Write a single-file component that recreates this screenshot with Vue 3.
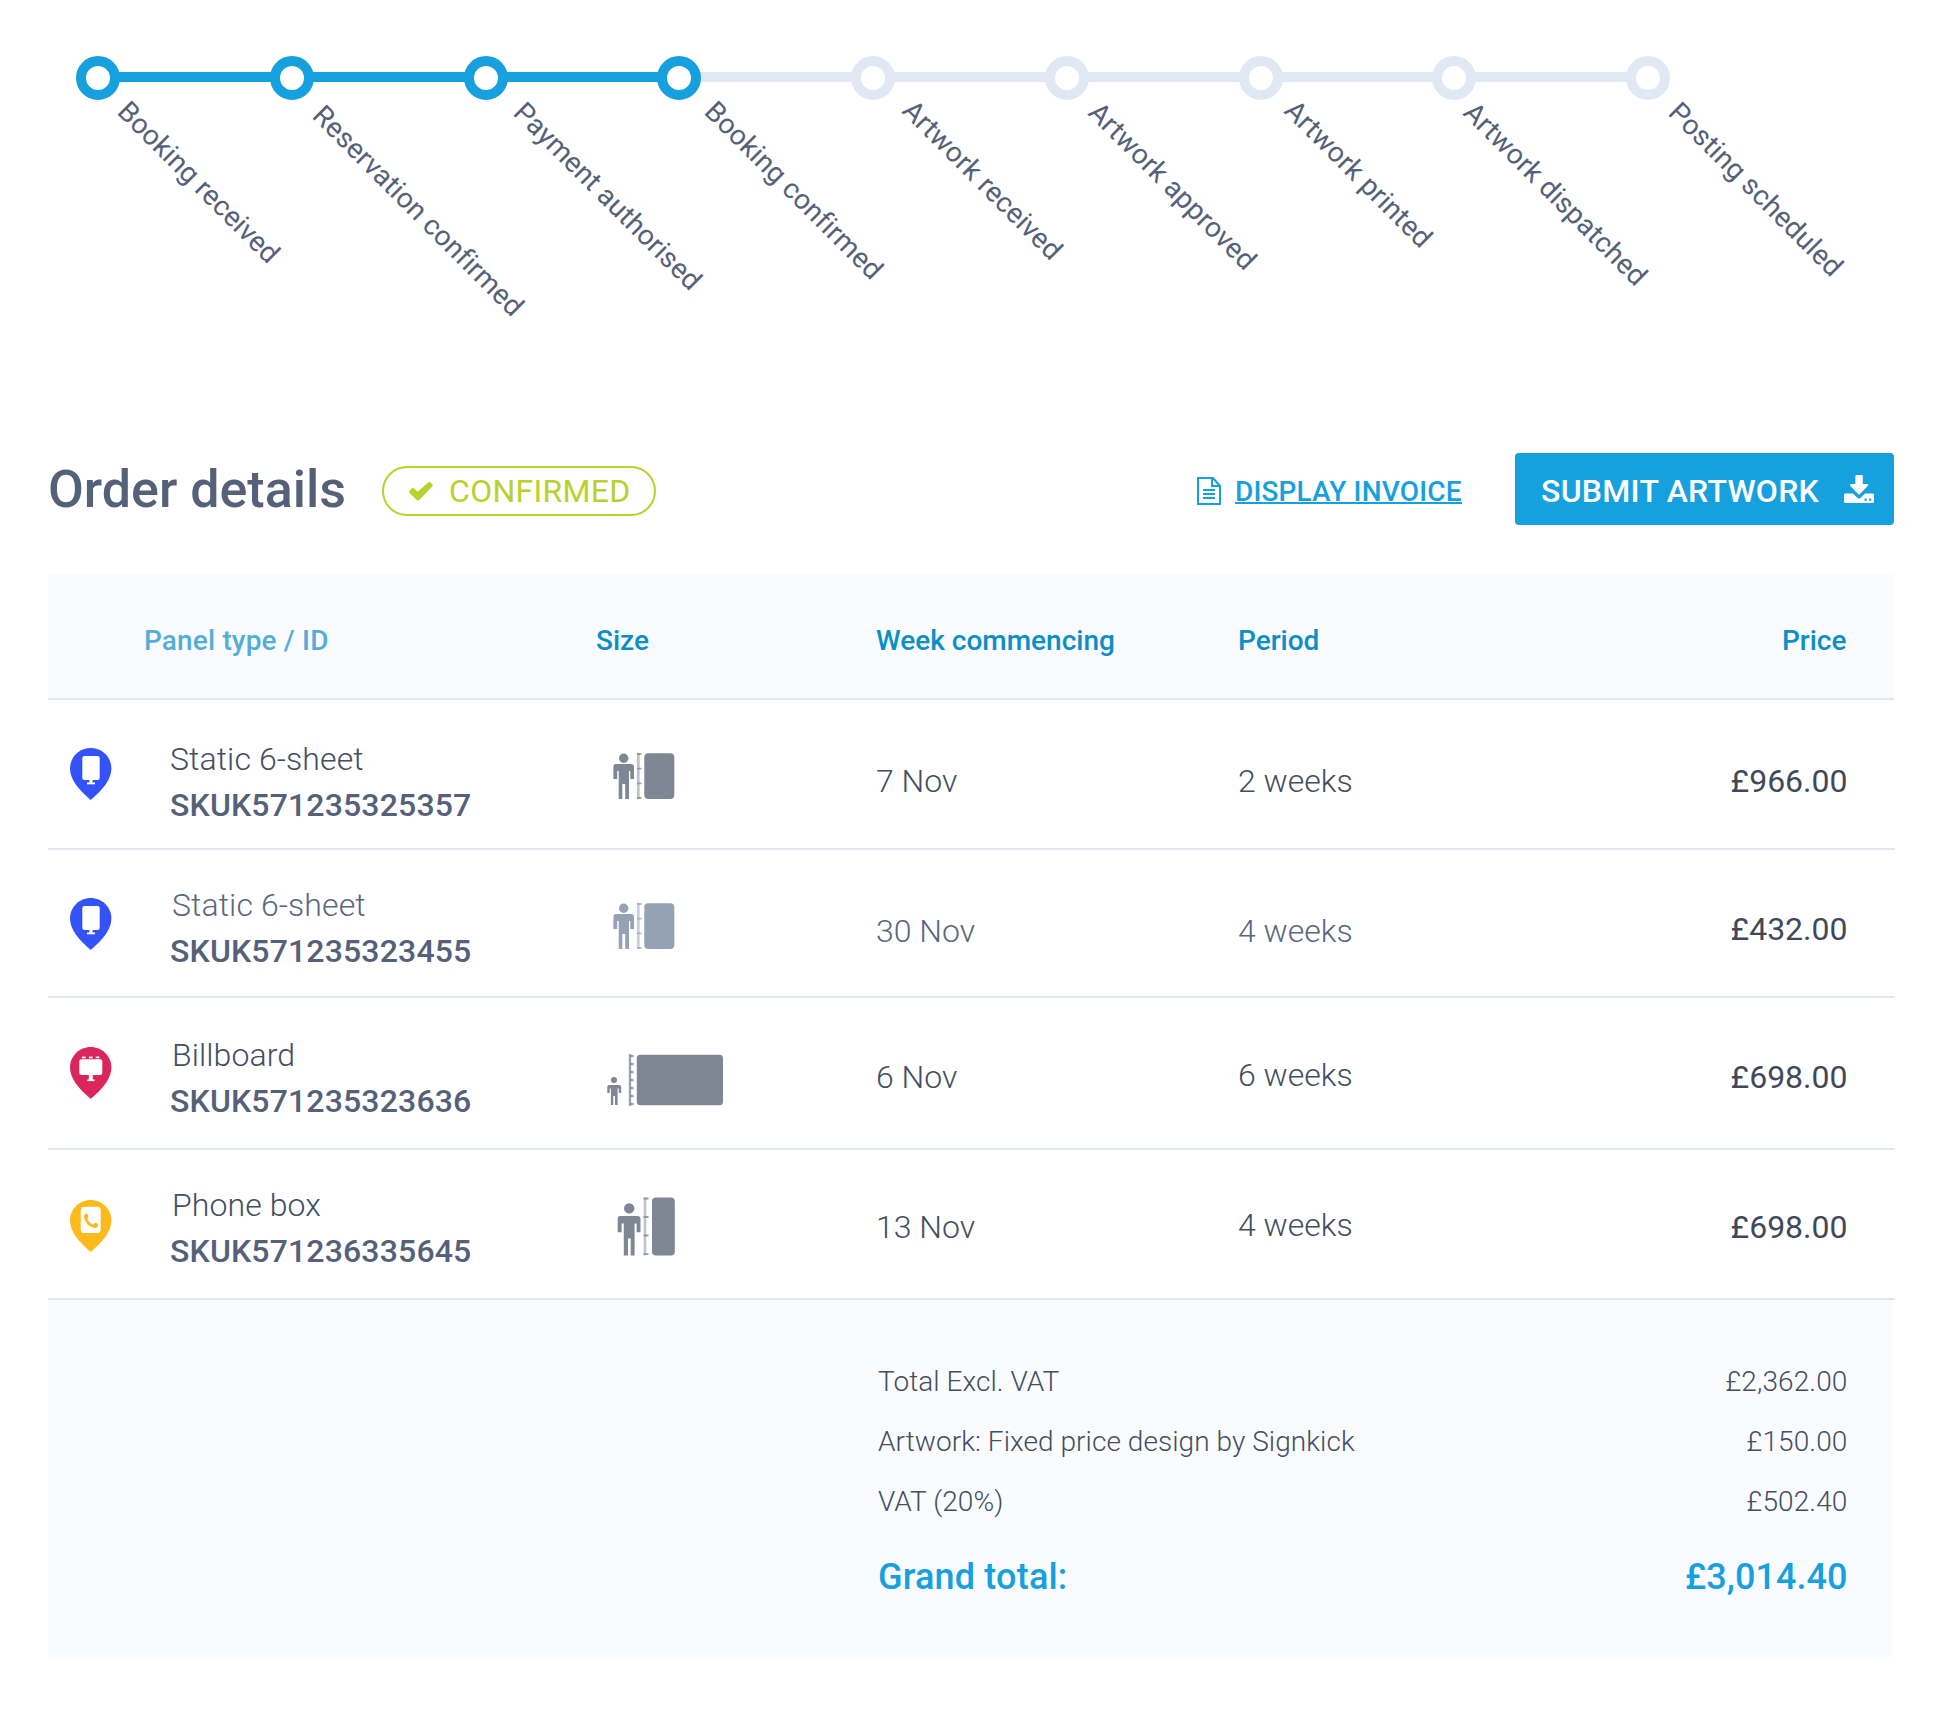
<script setup>
const steps = [
  { label: 'Booking received', done: true },
  { label: 'Reservation confirmed', done: true },
  { label: 'Payment authorised', done: true },
  { label: 'Booking confirmed', done: true },
  { label: 'Artwork received', done: false },
  { label: 'Artwork approved', done: false },
  { label: 'Artwork printed', done: false },
  { label: 'Artwork dispatched', done: false },
  { label: 'Posting scheduled', done: false },
]

const items = [
  { type: 'Static 6-sheet', id: 'SKUK571235325357', kind: 'sheet', week: '7 Nov', period: '2 weeks', price: '£966.00' },
  { type: 'Static 6-sheet', id: 'SKUK571235323455', kind: 'sheet', week: '30 Nov', period: '4 weeks', price: '£432.00', muted: true },
  { type: 'Billboard', id: 'SKUK571235323636', kind: 'billboard', week: '6 Nov', period: '6 weeks', price: '£698.00' },
  { type: 'Phone box', id: 'SKUK571236335645', kind: 'phone', week: '13 Nov', period: '4 weeks', price: '£698.00' },
]

const totals = [
  { label: 'Total Excl. VAT', value: '£2,362.00' },
  { label: 'Artwork: Fixed price design by Signkick', value: '£150.00' },
  { label: 'VAT (20%)', value: '£502.40' },
]

const billboardTicks = [0, 8, 16, 24, 32, 40, 48]
</script>

<template>
  <main class="page">
    <ol class="steps">
      <li v-for="(step, i) in steps" :key="step.label" class="step" :class="['s' + (i + 1), { done: step.done, lit: i < 3 }]">
        <span class="dot"></span>
        <span class="label">{{ step.label }}</span>
      </li>
    </ol>

    <header class="bar">
      <h1>Order details</h1>
      <span class="pill">
        <svg width="24" height="20" viewBox="0 0 24 20"><path d="M1 9.300 3 7.300Q4 6.600 5 7.300L8.600 10.700 19.500 1.300Q20.800.500 21.700 1.500L23.400 3.600Q24 4.700 23.200 5.600L10 19.200Q9 20 8 19.200L.600 12Q-.300 10.600 1 9.300Z" fill="currentColor" /></svg>
        CONFIRMED
      </span>
      <a class="invoice">
        <svg width="24" height="28" viewBox="0 0 24 28" fill="none" stroke="currentColor" stroke-width="2">
          <path d="M1 1H16L23 9V27H1Z" />
          <path d="M15 1V9H23M6 13H18M6 17H18M6 21H18" />
        </svg>
        <span>DISPLAY INVOICE</span>
      </a>
      <button class="submit">
        SUBMIT ARTWORK
        <svg width="30" height="28" viewBox="0 0 30 28" fill="currentColor">
          <path d="M12.600 0h5c.8 0 1.200.5 1.200 1.200V9h4.400c1 0 1.400 1 .7 1.700L15 20 6.200 10.700C5.500 10 6 9 7 9h4.400V1.200C11.400.5 11.800 0 12.600 0Z" />
          <path fill-rule="evenodd" d="M1.500 18.500H9l4 4c1.200 1.200 2.800 1.200 4 0l4-4h7.500c.9 0 1.500.7 1.500 1.500v6.500c0 .9-.6 1.500-1.500 1.500h-27C.6 28 0 27.400 0 26.500V20c0-.8.6-1.500 1.500-1.500ZM20.500 23.600v2.200h2.200v-2.200ZM25 23.600v2.200h2.200v-2.200Z" />
        </svg>
      </button>
    </header>

    <section class="table">
      <div class="head">
        <span class="first">Panel type / ID</span>
        <span>Size</span>
        <span>Week commencing</span>
        <span>Period</span>
        <span class="num">Price</span>
      </div>

      <div v-for="(item, i) in items" :key="item.id" class="row" :class="['r' + (i + 1), item.kind, { muted: item.muted }]">
        <svg class="pin" width="42" height="52" viewBox="0 0 42 52">
          <path d="M20.700 0C9.300 0 0 9 0 20.500 0 31.500 8.500 41.500 20.700 52 32.900 41.500 41.400 31.500 41.400 20.500 41.400 9 32.100 0 20.700 0Z" fill="currentColor" />
          <g v-if="item.kind === 'sheet'" fill="#fff">
            <rect x="12.300" y="8" width="17.400" height="24" rx="2.200" />
            <rect x="19.400" y="31" width="3.200" height="5" />
            <rect x="17" y="34.500" width="8" height="1.800" />
          </g>
          <g v-else-if="item.kind === 'billboard'" fill="#fff">
            <rect x="9.300" y="12.200" width="23" height="15.800" rx="2" />
            <rect x="12" y="9.600" width="3.600" height="1.700" />
            <rect x="18.900" y="9.600" width="3.600" height="1.700" />
            <rect x="25.800" y="9.600" width="3.600" height="1.700" />
            <rect x="18.800" y="27" width="4" height="6" />
            <rect x="17.300" y="32.400" width="7.200" height="1.700" />
          </g>
          <g v-else>
            <rect x="10.700" y="6.800" width="20" height="26.200" rx="3.600" fill="#fff" />
            <path d="M15.600 17C16 22 20 26 25.500 26.600" fill="none" stroke="currentColor" stroke-width="2.800" />
            <path d="M14 16.500c0-2 1-2.700 2.300-2.700 1.400 0 2 1.300 2 2.700s-.7 2.200-1.600 2.800l-2.300.4ZM23.500 24.200c.5-1 1.400-1.400 2.700-1.100 1.400.3 2.100 1 1.800 2.300-.3 1.400-1.200 2.400-2.800 2.400l-2.200-1Z" fill="currentColor" />
          </g>
        </svg>

        <div class="panel">
          <div class="type">{{ item.type }}</div>
          <div class="sku">{{ item.id }}</div>
        </div>

        <svg v-if="item.kind === 'sheet'" class="size" width="64" height="46" viewBox="0 0 64 46" fill="currentColor">
          <circle cx="10.700" cy="5.200" r="4.700" />
          <path d="M3 11H18Q21 11 21 14V26H17.300V18H16V46H12.200V31H9.300V46H5.700V18H4.200V26H.4V14Q.4 11 3 11Z" />
          <path d="M25.300 0V46" stroke="currentColor" stroke-width="2.800" stroke-opacity=".5" />
          <path d="M24 1H28.500M24 15.700H28.500M24 30.300H28.500M24 45H28.500" stroke="currentColor" stroke-width="1.800" stroke-opacity=".7" />
          <rect x="31.300" y=".3" width="30" height="45.600" rx="4" />
        </svg>
        <svg v-else-if="item.kind === 'billboard'" class="size" width="118" height="52" viewBox="0 0 118 52" fill="currentColor">
          <circle cx="7" cy="26" r="3" />
          <path d="M2 31H12Q14.200 31 14.200 33V39H11.800V34.500H10.600V51H8V42H6.200V51H3.900V34.500H2.700V39H.3V33Q.3 31 2 31Z" />
          <path d="M23 0V52" stroke="currentColor" stroke-width="2.400" stroke-opacity=".75" />
          <rect v-for="t in billboardTicks" :key="t" x="23" :y="t + 1" width="3.600" height="2.200" opacity=".8" />
          <rect x="29.800" y=".8" width="86.200" height="50.400" rx="3.500" />
        </svg>
        <svg v-else class="size" width="60" height="59" viewBox="0 0 60 59" fill="currentColor">
          <circle cx="12.200" cy="11.400" r="5.200" />
          <path d="M3 19H20.500Q23.500 19 23.500 22V35.200H19.600V26.500H17.600V58.500H13.700V41.500H11V58.500H6.800V26.500H4.600V35.200H.7V22Q.7 19 3 19Z" />
          <path d="M28 .5V58.500" stroke="currentColor" stroke-width="2.600" stroke-opacity=".5" />
          <path d="M26.600 1.500H31.500M26.600 20H31.500M26.600 38.500H31.500M26.600 57.200H31.500" stroke="currentColor" stroke-width="1.800" stroke-opacity=".8" />
          <rect x="35" y=".4" width="22.800" height="58" rx="4" />
        </svg>

        <span class="week">{{ item.week }}</span>
        <span class="period">{{ item.period }}</span>
        <span class="price num">{{ item.price }}</span>
      </div>

      <footer class="totals">
        <div v-for="t in totals" :key="t.label" class="line">
          <span>{{ t.label }}</span>
          <span class="amount">{{ t.value }}</span>
        </div>
        <div class="line grand">
          <span>Grand total:</span>
          <span class="sum">£3,014.40</span>
        </div>
      </footer>
    </section>
  </main>
</template>

<style>
body {
  margin: 0;
  background: #fff;
}
</style>

<style scoped>
.page {
  box-sizing: border-box;
  width: 1956px;
  height: 1724px;
  padding: 56px 61px 0 48px;
  overflow: hidden;
  font-family: Roboto, 'Liberation Sans', sans-serif;
  color: #434e60;
}

/* progress tracker */
.steps {
  display: flex;
  height: 397px;
  margin: 0;
  padding: 0 0 0 28px;
  box-sizing: border-box;
  list-style: none;
}
.step {
  position: relative;
  flex: none;
  width: 193.75px;
  height: 44px;
  color: #e0e8f4;
}
.step.done {
  color: #17a0de;
}
.step::before {
  content: '';
  position: absolute;
  left: 42px;
  top: 16px;
  width: 154px;
  height: 10px;
  background: #e0e8f4;
}
.step.lit::before {
  background: #17a0de;
}
.step:last-child::before {
  display: none;
}
.dot {
  position: relative;
  display: block;
  box-sizing: border-box;
  width: 44px;
  height: 44px;
  border: 10px solid currentColor;
  border-radius: 50%;
  background: #fff;
}
.label {
  position: absolute;
  left: calc(22px + var(--dx));
  top: calc(22px - 26px + var(--dy));
  font-size: 28px;
  line-height: 33px;
  letter-spacing: 0.13px;
  white-space: nowrap;
  color: #556178;
  transform: rotate(45deg);
  transform-origin: 0 26px;
}
.s1 { --dx: 18px; --dy: 34.5px; }
.s2 { --dx: 18.8px; --dy: 38.7px; }
.s3 { --dx: 26.2px; --dy: 36px; }
.s4 { --dx: 23.8px; --dy: 34.9px; }
.s5 { --dx: 27.9px; --dy: 34.2px; }
.s6 { --dx: 20.1px; --dy: 36.2px; }
.s7 { --dx: 22.9px; --dy: 34.4px; }
.s8 { --dx: 7.8px; --dy: 36.4px; }
.s9 { --dx: 18.6px; --dy: 35.7px; }

/* heading bar */
.bar {
  display: flex;
  width: 1846px;
  height: 121px;
}
h1 {
  width: 334px;
  margin: 6px 0 0;
  font-size: 52px;
  line-height: 62px;
  font-weight: 500;
  color: #556178;
  white-space: nowrap;
}
.pill {
  display: flex;
  box-sizing: border-box;
  width: 274px;
  height: 50px;
  margin-top: 13px;
  padding: 4px 0 0 25px;
  border: 2px solid #b9d12b;
  border-radius: 25px;
  font-size: 32px;
  line-height: 38px;
  font-weight: 400;
  letter-spacing: 0.3px;
  color: #b9d12b;
}
.pill svg {
  margin: 9px 16px 0 0;
}
.invoice {
  display: flex;
  margin: 24px 0 0 541px;
  font-size: 28px;
  line-height: 33px;
  font-weight: 500;
  letter-spacing: 0.14px;
  color: #17a0de;
}
.invoice span {
  height: 27px;
  margin: -2px 0 0 14px;
  border-bottom: 2px solid #17a0de;
}
.submit {
  display: flex;
  box-sizing: border-box;
  width: 379px;
  height: 72px;
  margin-left: auto;
  padding: 19px 20px 0 26px;
  border: 0;
  border-radius: 4px;
  background: #17a0de;
  color: #fff;
  font: 500 32px/38px Roboto, 'Liberation Sans', sans-serif;
  letter-spacing: 0.26px;
  justify-content: space-between;
  white-space: nowrap;
}
.submit svg {
  margin-top: 3px;
}

/* order table */
.table {
  width: 1847px;
}
.head,
.row {
  display: grid;
  box-sizing: border-box;
  border-bottom: 2px solid #dfe8f4;
  align-items: start;
}
.head {
  grid-template-columns: 452px 280px 362px 300px 1fr;
  width: 1846px;
  height: 126px;
  padding: 50px 47.500px 0 96px;
  border-radius: 4px 4px 0 0;
  background: #fafbfd;
  font-size: 28px;
  line-height: 33px;
  font-weight: 500;
  color: #0c8ec7;
}
.first {
  letter-spacing: 0.15px;
  opacity: 0.7;
}
.num {
  text-align: right;
}
.row {
  grid-template-columns: 100px 443px 263px 362px 300px 1fr;
  height: 150px;
  padding: 0 47.500px 0 22px;
  font-size: 32px;
  line-height: 38px;
  font-weight: 300;
}
.r2 { height: 148px; }
.r3 { height: 152px; }
.panel {
  line-height: 46px;
  margin-top: 32px;
}
.r1 .panel { margin-top: 36px; }
.r3 .panel { margin-top: 34px; }
.type {
  padding-left: 2px;
  letter-spacing: 0.1px;
}
.r1 .type { padding-left: 0; }
.sku {
  font-weight: 500;
  letter-spacing: 0.15px;
  color: #556178;
}
.muted {
  color: #5a677d;
}
.pin { margin-top: 48px; color: #3452f9; }
.r3 .pin { margin-top: 49px; color: #db265c; }
.r4 .pin { margin-top: 50px; color: #fdba1b; }
.size {
  margin: 53px 0 0 0;
  color: #7f8795;
}
.muted .size { color: #95a1b5; }
.billboard .size { margin: 56px 0 0 -6px; }
.phone .size { margin: 47px 0 0 4px; }
.week,
.period,
.price {
  margin-top: 62px;
}
.price {
  font-weight: 400;
  color: #3f4959;
}
.r2 .price { margin-top: 60px; }
.r3 .week, .r3 .price { margin-top: 60px; }
.r3 .period { margin-top: 58px; }
.r4 .week, .r4 .price { margin-top: 58px; }
.r4 .period { margin-top: 56px; }

/* totals */
.totals {
  box-sizing: border-box;
  width: 1844px;
  height: 357px;
  padding: 52px 44.500px 0 830px;
  background: #fafbfd;
  font-size: 28px;
  font-weight: 300;
  letter-spacing: 0.06px;
}
.line {
  display: flex;
  justify-content: space-between;
  line-height: 60px;
}
.amount {
  letter-spacing: 0.12px;
}
.grand {
  margin-top: 15px;
  font-size: 36px;
  font-weight: 500;
  letter-spacing: 0.18px;
  color: #17a0de;
}
.sum {
  letter-spacing: 0.05px;
}
</style>
